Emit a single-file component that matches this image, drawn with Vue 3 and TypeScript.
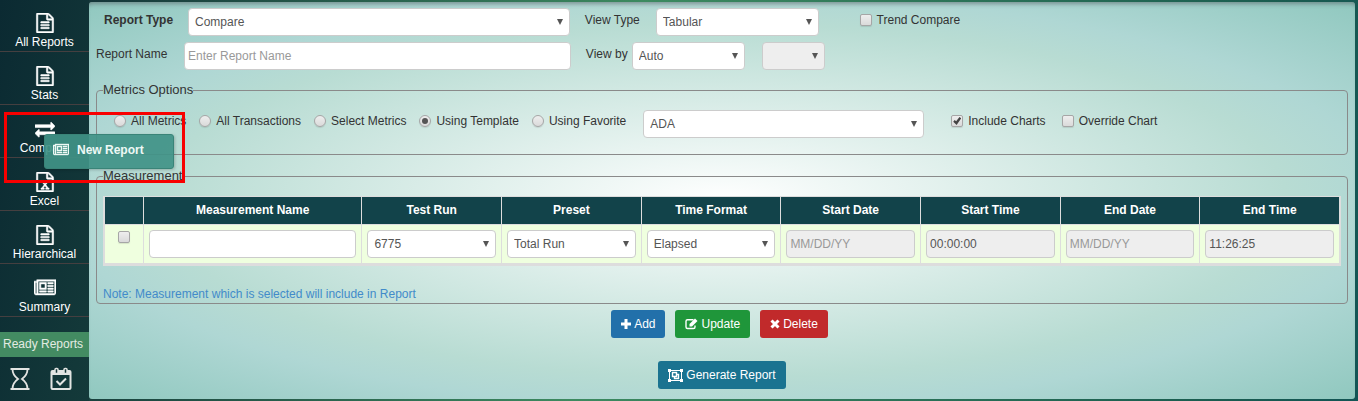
<script setup lang="ts">
import { ref } from 'vue'

type IconName = 'file' | 'exchange' | 'excel' | 'news'

interface NavItem {
  label: string
  icon: IconName
}

const navItems: NavItem[] = [
  { label: 'All Reports', icon: 'file' },
  { label: 'Stats', icon: 'file' },
  { label: 'Compare', icon: 'exchange' },
  { label: 'Excel', icon: 'excel' },
  { label: 'Hierarchical', icon: 'file' },
  { label: 'Summary', icon: 'news' },
]

const metricModes = ['All Metrics', 'All Transactions', 'Select Metrics', 'Using Template', 'Using Favorite']
const columns = ['Measurement Name', 'Test Run', 'Preset', 'Time Format', 'Start Date', 'Start Time', 'End Date', 'End Time']

const metricMode = ref('Using Template')
const reportName = ref('')
const includeCharts = ref(true)
const overrideChart = ref(false)
const trendCompare = ref(false)
const rowSelected = ref(false)
const measurementName = ref('')
</script>

<template>
  <div class="app">
    <svg class="defs" aria-hidden="true">
      <symbol id="i-file" viewBox="0 0 1536 1792">
        <path d="M1468 380q28 28 48 76t20 88v1152q0 40-28 68t-68 28h-1344q-40 0-68-28t-28-68v-1600q0-40 28-68t68-28h896q40 0 88 20t76 48zm-444-244v376h376q-10-29-22-41l-313-313q-12-12-41-22zm384 1528v-1024h-416q-40 0-68-28t-28-68v-416h-768v1536h1280zm-1024-864q0-14 9-23t23-9h704q14 0 23 9t9 23v64q0 14-9 23t-23 9h-704q-14 0-23-9t-9-23v-64zm736 224q14 0 23 9t9 23v64q0 14-9 23t-23 9h-704q-14 0-23-9t-9-23v-64q0-14 9-23t23-9h704zm0 256q14 0 23 9t9 23v64q0 14-9 23t-23 9h-704q-14 0-23-9t-9-23v-64q0-14 9-23t23-9h704z" />
      </symbol>
      <symbol id="i-excel" viewBox="0 0 1536 1792">
        <path d="M1468 380q28 28 48 76t20 88v1152q0 40-28 68t-68 28h-1344q-40 0-68-28t-28-68v-1600q0-40 28-68t68-28h896q40 0 88 20t76 48zm-444-244v376h376q-10-29-22-41l-313-313q-12-12-41-22zm384 1528v-1024h-416q-40 0-68-28t-28-68v-416h-768v1536h1280z" />
        <path d="M420 760h290v110h-70l130 205 135-205h-75v-110h285v110h-75l-195 275 210 295h80v110h-300v-110h75l-145-215-145 215h80v110h-290v-110h75l210-290-200-280h-75z" />
      </symbol>
      <symbol id="i-exchange" viewBox="0 0 1792 1792">
        <path d="M1792 1184v192q0 13-9.500 22.500t-22.500 9.500h-1376v192q0 13-9.500 22.500t-22.500 9.500q-12 0-24-10l-319-320q-9-9-9-22 0-14 9-23l320-320q9-9 23-9 13 0 22.500 9.500t9.500 22.500v192h1376q13 0 22.500 9.500t9.500 22.500zm0-544q0 14-9 23l-320 320q-9 9-23 9-13 0-22.500-9.500t-9.500-22.500v-192h-1376q-13 0-22.500-9.500t-9.500-22.500v-192q0-13 9.500-22.500t22.500-9.500h1376v-192q0-14 9-23t23-9q12 0 24 10l319 319q9 9 9 23z" />
      </symbol>
      <symbol id="i-news" viewBox="0 0 2048 1792">
        <path fill-rule="evenodd" d="M1024 512h-384v384h384zm128 640v128h-640v-128zm0-768v640h-640v-640zm640 768v128h-512v-128zm0-256v128h-512v-128zm0-256v128h-512v-128zm0-256v128h-512v-128zM256 1344v-960h-128v960q0 26 19 45t45 19 45-19 19-45zm1664 0v-1088h-1536v1088q0 33-11 64h1483q26 0 45-19t19-45zM2048 128v1216q0 80-56 136t-136 56h-1664q-80 0-136-56t-56-136v-1088h256v-128z" />
      </symbol>
    </svg>

    <aside class="sidebar">
      <nav>
        <ul class="nav">
          <li v-for="item in navItems" :key="item.label">
            <a href="#">
              <svg class="nav-icon" :class="item.icon" aria-hidden="true"><use :href="`#i-${item.icon}`" /></svg>
              <span>{{ item.label }}</span>
            </a>
          </li>
        </ul>
      </nav>
      <a class="ready" href="#">Ready Reports</a>
      <div class="tools">
        <button type="button" aria-label="Pending reports">
          <svg viewBox="0 0 22 24" fill="none" stroke="currentColor" stroke-width="1.800">
            <path d="M1.500 2h19M1.500 22h19" stroke-width="2" />
            <path d="M3.500 2c0 5 2 7.500 5.500 10-3.500 2.500-5.500 5-5.500 10M18.500 2c0 5-2 7.500-5.500 10 3.500 2.500 5.500 5 5.500 10" />
          </svg>
        </button>
        <button type="button" aria-label="Scheduled reports">
          <svg viewBox="0 0 22 24" fill="none" stroke="currentColor" stroke-width="2">
            <rect x="1.500" y="4" width="19" height="18" rx="1" />
            <path d="M1 6h20" stroke-width="4" />
            <rect x="5" y="1.500" width="3" height="5" rx="1" fill="#17383a" stroke-width="1.500" />
            <rect x="14" y="1.500" width="3" height="5" rx="1" fill="#17383a" stroke-width="1.500" />
            <path d="M6.500 14l3.500 3.500 6-6" />
          </svg>
        </button>
      </div>
    </aside>

    <main class="panel">
      <form @submit.prevent>
        <div class="row">
          <label class="lead strong" for="report-type">Report Type</label>
          <span class="pick w-type"><select id="report-type"><option>Compare</option></select></span>
          <label class="view-type" for="view-type">View Type</label>
          <span class="pick w-view"><select id="view-type"><option>Tabular</option></select></span>
          <label class="tick trend"><input v-model="trendCompare" type="checkbox" />Trend Compare</label>
        </div>
        <div class="row">
          <label class="lead" for="report-name">Report Name</label>
          <input id="report-name" v-model="reportName" class="text w-name" type="text" placeholder="Enter Report Name" />
          <label class="view-by" for="view-by">View by</label>
          <span class="pick w-by"><select id="view-by"><option>Auto</option></select></span>
          <span class="pick w-sub"><select disabled aria-label="View by value"><option></option></select></span>
        </div>

        <fieldset>
          <legend>Metrics Options</legend>
          <div class="metrics">
            <label v-for="mode in metricModes" :key="mode" class="tick">
              <input v-model="metricMode" type="radio" name="metric-mode" :value="mode" />{{ mode }}
            </label>
            <span class="pick w-template"><select aria-label="Template"><option>ADA</option></select></span>
            <label class="tick include"><input v-model="includeCharts" type="checkbox" />Include Charts</label>
            <label class="tick"><input v-model="overrideChart" type="checkbox" />Override Chart</label>
          </div>
        </fieldset>

        <fieldset class="measure">
          <legend>Measurement</legend>
          <table>
            <colgroup>
              <col class="c-check" />
              <col class="c-name" />
              <col v-for="n in 7" :key="n" />
            </colgroup>
            <thead>
              <tr>
                <th></th>
                <th v-for="c in columns" :key="c" scope="col">{{ c }}</th>
              </tr>
            </thead>
            <tbody>
              <tr>
                <td class="check"><input v-model="rowSelected" type="checkbox" aria-label="Select measurement" /></td>
                <td><input v-model="measurementName" class="text" type="text" aria-label="Measurement Name" /></td>
                <td><span class="pick"><select aria-label="Test Run"><option>6775</option></select></span></td>
                <td><span class="pick"><select aria-label="Preset"><option>Total Run</option></select></span></td>
                <td><span class="pick"><select aria-label="Time Format"><option>Elapsed</option></select></span></td>
                <td><input class="text" type="text" placeholder="MM/DD/YY" disabled aria-label="Start Date" /></td>
                <td><input class="text" type="text" value="00:00:00" disabled aria-label="Start Time" /></td>
                <td><input class="text" type="text" placeholder="MM/DD/YY" disabled aria-label="End Date" /></td>
                <td><input class="text" type="text" value="11:26:25" disabled aria-label="End Time" /></td>
              </tr>
            </tbody>
          </table>
          <p class="note">Note: Measurement which is selected will include in Report</p>
        </fieldset>

        <div class="actions">
          <button class="btn add" type="button">
            <svg viewBox="0 0 10 12"><path d="M3.500 1h3v3.500h3.500v3h-3.500v3.500h-3v-3.500h-3.500v-3h3.500z" fill="currentColor" /></svg>Add
          </button>
          <button class="btn update" type="button">
            <svg class="wide" viewBox="0 0 13 12" fill="none" stroke="currentColor">
              <path d="M8.500 1.800H2.500a1.500 1.500 0 0 0-1.500 1.500v5.700a1.500 1.500 0 0 0 1.500 1.500h6a1.500 1.500 0 0 0 1.500-1.500V7.500" stroke-width="1.400" />
              <path d="M4.500 8.500V6L10 .500l2.500 2.500L7 8.500z" fill="currentColor" stroke="none" />
            </svg>Update
          </button>
          <button class="btn delete" type="button">
            <svg viewBox="0 0 10 12"><path d="M1.500 2.500l7 7M8.500 2.500l-7 7" stroke="currentColor" stroke-width="3" /></svg>Delete
          </button>
        </div>
        <div class="submit">
          <button class="btn generate" type="submit">
            <svg class="group" viewBox="0 0 15 13" fill="none" stroke="currentColor">
              <path d="M3 1.500h9M3 11.500h9M1.500 3v7M13.500 3v7" />
              <path d="M0 0h3v3h-3zM12 0h3v3h-3zM0 10h3v3h-3zM12 10h3v3h-3z" fill="currentColor" stroke="none" />
              <path d="M4.500 3.500h4v4h-4zM8.500 5.500h2v4h-4v-2" stroke-width="1.400" />
            </svg>Generate Report
          </button>
        </div>
      </form>
    </main>

    <button class="flyout" type="button">
      <svg aria-hidden="true"><use href="#i-news" /></svg>New Report
    </button>
    <div class="highlight"></div>
  </div>
</template>

<style>
body {
  margin: 0;
}
</style>

<style scoped>
.app,
.app * {
  box-sizing: border-box;
}
.app {
  position: relative;
  display: flex;
  min-height: 100vh;
  font: 12px/16px "Liberation Sans", Arial, sans-serif;
  color: #333;
  background: linear-gradient(100deg, #0b2a32 0, #15383a 7%, #3d8a60 45%, #1a5c50 90%, #135555 100%);
}
.defs {
  position: absolute;
  width: 0;
  height: 0;
}
a {
  color: inherit;
  text-decoration: none;
}
button,
input,
select {
  font: inherit;
  margin: 0;
}

.sidebar {
  flex: 0 0 89px;
  color: #fff;
  background: linear-gradient(100deg, #0b2a32, #143a3a);
}
.nav {
  display: grid;
  gap: 1px;
  margin: 0;
  padding: 0;
  list-style: none;
}
.nav li {
  border-bottom: 1px solid #453f40;
}
.nav a {
  display: flex;
  flex-direction: column;
  align-items: center;
  gap: 1px;
  padding: 13px 0 1px;
}
.nav-icon {
  width: 20px;
  height: 20px;
  fill: currentColor;
  stroke: currentColor;
  stroke-width: 50px;
}
.nav-icon.news {
  width: 22px;
}
.ready {
  display: block;
  margin-top: 15px;
  padding: 4px 0 5px 3px;
  white-space: nowrap;
  color: #e3ebe3;
  background: #438b62;
}
.tools {
  display: flex;
  gap: 19px;
  padding: 10px 0 0 9px;
}
.tools button {
  display: block;
  padding: 0;
  border: 0;
  color: #e2e4e2;
  background: none;
}
.tools svg {
  display: block;
  width: 22px;
  height: 24px;
}

.panel {
  flex: 1;
  min-width: 0;
  margin: 2px 3px 2px 0;
  padding: 6px 7px 10px;
  border-radius: 3px;
  background: radial-gradient(ellipse farthest-corner at center, #fff 0, #b8dcd3 63%, #afd7d4 74%, #90c8bf 100%);
  box-shadow: inset 0 5px 4px -3px rgba(90, 100, 105, 0.6);
}

.row {
  display: flex;
  align-items: flex-start;
  margin-bottom: 6px;
  line-height: 24px;
}
.lead {
  flex: 0 0 88px;
}
.strong {
  flex-basis: 92px;
  padding-left: 8px;
  font-weight: bold;
}
.w-type {
  width: 30.5%;
}
.w-name {
  width: 30.9%;
}
.w-view {
  width: 13%;
}
.w-by {
  width: 9%;
}
.w-sub {
  width: 5.1%;
  margin-left: 17px;
}
.w-template {
  width: 22.9%;
  margin: 0 14px 0 4px;
}
.include {
  margin-right: 3px;
}
.view-type {
  width: 86px;
  padding-left: 15px;
}
.view-by {
  width: 61px;
  padding-left: 15px;
}
.trend {
  margin-left: 41px;
}

.pick {
  display: grid;
  align-items: center;
}
.pick::after {
  content: "";
  grid-area: 1 / 1;
  justify-self: end;
  margin-right: 7px;
  border: solid transparent;
  border-width: 6px 3px 0;
  border-top-color: #555;
  pointer-events: none;
}
select {
  grid-area: 1 / 1;
  appearance: none;
  width: 100%;
  height: 28px;
  padding: 0 16px 0 6px;
  line-height: 16px;
  border: 1px solid #ccc;
  border-radius: 4px;
  color: #555;
  background: #fff;
  opacity: 1;
}
.text {
  height: 28px;
  padding: 0 3px;
  border: 1px solid #ccc;
  border-radius: 4px;
  color: #555;
  background: #fff;
}
.text::placeholder {
  color: #999;
}
select:disabled,
.text:disabled {
  background: #eee;
}

.tick {
  display: flex;
  align-items: center;
  gap: 5px;
  white-space: nowrap;
}
[type="checkbox"],
[type="radio"] {
  appearance: none;
  flex: none;
  display: grid;
  place-items: center;
  width: 12px;
  height: 12px;
  border: 1px solid #a6a6a6;
  border-radius: 2px;
  background: linear-gradient(#eee, #dadada);
  box-shadow: 0 1px 1px rgba(0, 0, 0, 0.1);
}
[type="radio"] {
  border-radius: 50%;
}
[type="radio"]:checked::before {
  content: "";
  width: 6px;
  height: 6px;
  border-radius: 50%;
  background: #555;
}
[type="checkbox"]:checked::before {
  content: "";
  width: 8px;
  height: 8px;
  background: #444;
  clip-path: polygon(0 58%, 18% 36%, 36% 54%, 78% 0, 100% 16%, 42% 100%);
}

fieldset {
  min-width: 0;
  margin: 12px 0 0;
  padding: 12px 6px 16px;
  border: 1px solid #8a8a8a;
  border-radius: 4px;
}
.measure {
  margin-top: 13px;
  padding-bottom: 1px;
}
legend {
  padding: 0;
  font-size: 13px;
}
.metrics {
  display: flex;
  align-items: flex-start;
  gap: 13px;
  padding-left: 11px;
  line-height: 22px;
}
.row:nth-of-type(2) {
  margin-bottom: 0;
}

table {
  width: 100%;
  table-layout: fixed;
  border: solid #ddd;
  border-width: 1px 2px 3px;
  border-spacing: 0;
}
.c-check {
  width: 38px;
}
.c-name {
  width: 17.7%;
}
th,
td {
  padding: 5px;
}
th + th,
td + td {
  border-left: 1px solid #ddd;
}
th {
  padding: 5px 0 6px;
  border-bottom: 1px solid #ddd;
  color: #fff;
  background: #12434a;
}
td {
  background: #efffdf;
}
td .text {
  display: block;
  width: 100%;
}
.check {
  padding-top: 6px;
  vertical-align: top;
}
.check input {
  margin: 0 auto;
}
.note {
  margin: 20px 0 0;
  color: #428bca;
}

.actions,
.submit {
  display: flex;
  justify-content: center;
  gap: 10px;
}
.actions {
  margin-top: 6px;
  padding-right: 5px;
}
.submit {
  margin-top: 23px;
}
.btn {
  display: flex;
  align-items: center;
  gap: 3px;
  height: 28px;
  padding: 0 10px;
  border: 0;
  border-radius: 3px;
  color: #fff;
}
.btn svg {
  width: 10px;
  height: 12px;
}
.btn .wide {
  width: 13px;
}
.btn .group {
  width: 15px;
  height: 13px;
}
.add {
  background: #2270aa;
}
.update {
  background: #1f963a;
}
.delete {
  background: #c12a2b;
}
.generate {
  background: #1a7390;
}

.flyout {
  position: absolute;
  left: 44px;
  top: 134px;
  display: flex;
  align-items: center;
  gap: 8px;
  width: 130px;
  height: 35px;
  padding: 0 8px 3px;
  border: 1px solid #3a8478;
  border-radius: 3px;
  font-weight: bold;
  color: #eef8f5;
  background: rgba(64, 147, 135, 0.92);
  box-shadow: 1px 1px 3px rgba(0, 0, 0, 0.2);
}
.flyout svg {
  width: 16px;
  height: 14px;
  fill: currentColor;
  stroke: currentColor;
  stroke-width: 50px;
}
.highlight {
  position: absolute;
  left: 4px;
  top: 112px;
  width: 181px;
  height: 71px;
  border: 3px solid #f80000;
  pointer-events: none;
}
</style>
